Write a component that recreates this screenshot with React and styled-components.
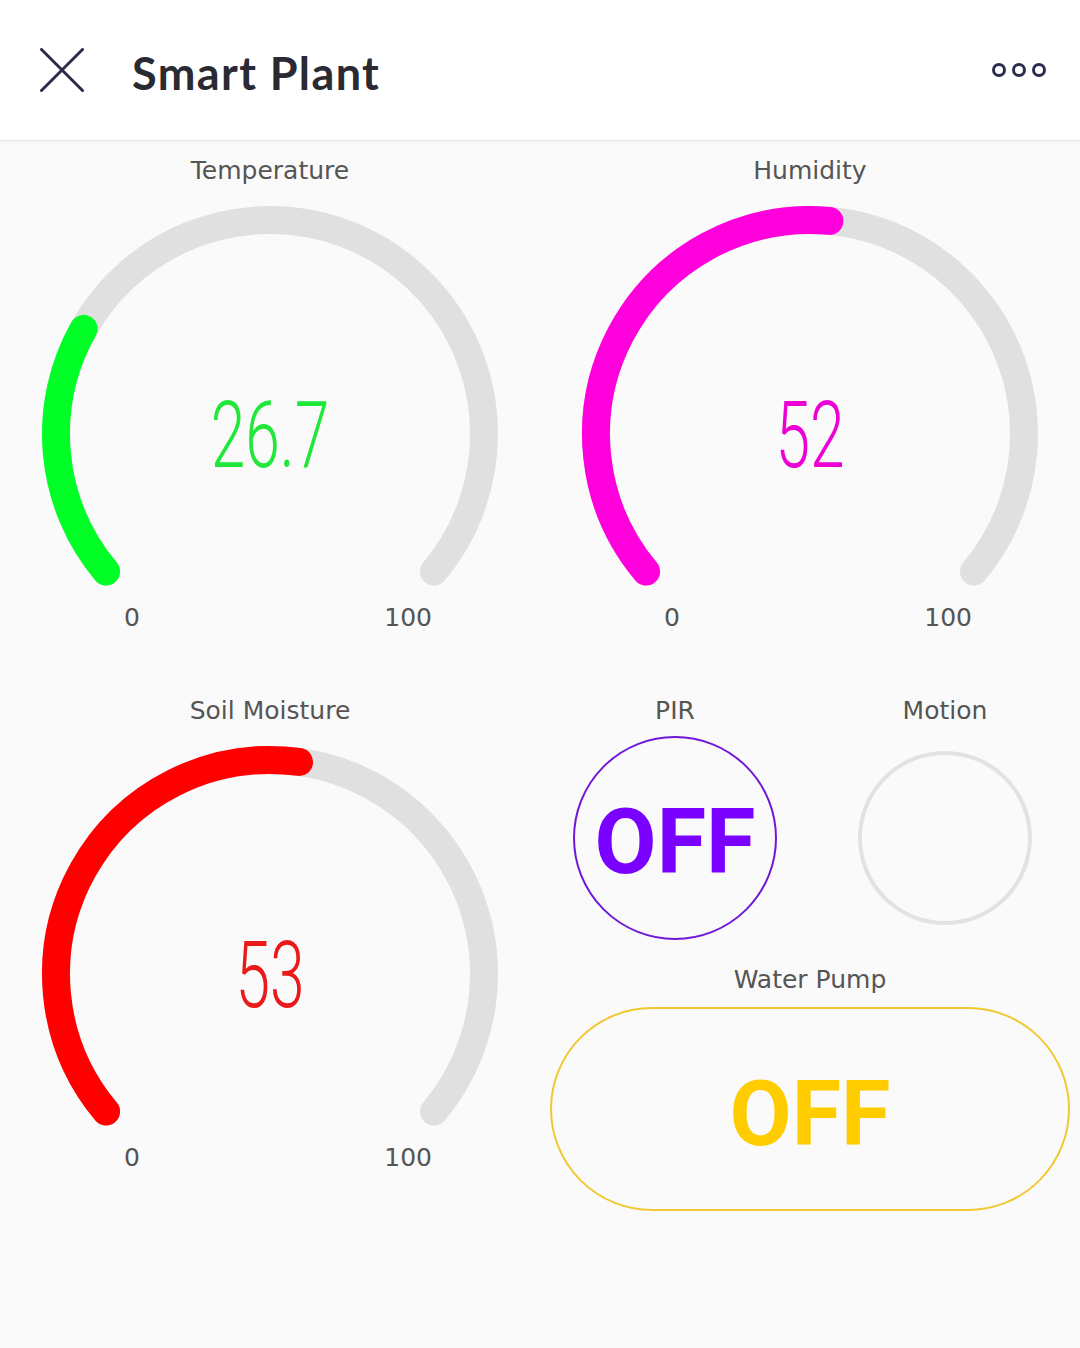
import React from 'react';
import styled, { createGlobalStyle } from 'styled-components';

const GlobalStyle = createGlobalStyle`
    html, body {
        margin: 0;
        padding: 0;
        background: #fafafa;
    }
    body {
        font-family: "Lato", "Liberation Sans", sans-serif;
    }
`

const CX = 270;
const CY = 248;
const R = 214;
const SPAN = 260;
const START = 220;

function point(deg) {
    const rad = (deg * Math.PI) / 180;
    return [CX + R * Math.cos(rad), CY - R * Math.sin(rad)];
}

function arcPath(fraction) {
    const sweep = SPAN * fraction;
    const [x1, y1] = point(START);
    const [x2, y2] = point(START - sweep);
    const large = sweep > 180 ? 1 : 0;
    return `M ${x1.toFixed(2)} ${y1.toFixed(2)} A ${R} ${R} 0 ${large} 1 ${x2.toFixed(2)} ${y2.toFixed(2)}`;
}

const Gauge = ({ label, value, display, color, textColor }) => (
    <Widget>
        <Label>{label}</Label>
        <GaugeBox>
            <svg width="540" height="420" viewBox="0 0 540 420">
                <path d={arcPath(1)} fill="none" stroke="#e0e0e0" strokeWidth="28" strokeLinecap="round" />
                <path d={arcPath(value / 100)} fill="none" stroke={color} strokeWidth="28" strokeLinecap="round" />
            </svg>
            <Value color={textColor}>{display}</Value>
        </GaugeBox>
        <ScaleRow>
            <Label as="span">0</Label>
            <Label as="span">100</Label>
        </ScaleRow>
    </Widget>
)

const App = () => (
    <Page>
        <GlobalStyle />
        <Header>
            <HeaderLeft>
                <svg width="44" height="44" viewBox="0 0 44 44">
                    <path d="M1.5 1.5 L42.5 42.5 M42.5 1.5 L1.5 42.5" stroke="#2b2d4a" strokeWidth="3" strokeLinecap="round" />
                </svg>
                <Title>Smart Plant</Title>
            </HeaderLeft>
            <svg width="54" height="18" viewBox="0 0 54 18">
                <circle cx="7" cy="9" r="5.5" fill="none" stroke="#2b2d4f" strokeWidth="3" />
                <circle cx="27" cy="9" r="5.5" fill="none" stroke="#2b2d4f" strokeWidth="3" />
                <circle cx="47" cy="9" r="5.5" fill="none" stroke="#2b2d4f" strokeWidth="3" />
            </svg>
        </Header>
        <Grid>
            <Gauge label="Temperature" value={26.7} display="26.7" color="#00ff26" textColor="#20e83a" />
            <Gauge label="Humidity" value={52} display="52" color="#ff00dc" textColor="#ec00d4" />
            <Gauge label="Soil Moisture" value={53} display="53" color="#ff0000" textColor="#ea1a1a" />
            <Widget>
                <SensorRow>
                    <SensorCol>
                        <Label>PIR</Label>
                        <CircleArea>
                            <RoundButton>OFF</RoundButton>
                        </CircleArea>
                    </SensorCol>
                    <SensorCol>
                        <Label>Motion</Label>
                        <CircleArea>
                            <Led />
                        </CircleArea>
                    </SensorCol>
                </SensorRow>
                <Label style={{ marginTop: 25 }}>Water Pump</Label>
                <PillButton>OFF</PillButton>
            </Widget>
        </Grid>
    </Page>
)

export default App;

//Styled Components
const Page = styled.div`
    width: 1080px;
    min-height: 1348px;
    background: #fafafa;
`

const Header = styled.header`
    height: 141px;
    background: #fff;
    border-bottom: 1px solid #e6e6e6;
    box-shadow: 0 1px 3px rgba(0, 0, 0, 0.05);
    display: flex;
    align-items: center;
    justify-content: space-between;
    padding: 0 34px 0 40px;
    box-sizing: border-box;
`

const HeaderLeft = styled.div`
    display: flex;
    align-items: center;
    gap: 48px;
`

const Title = styled.h1`
    margin: 0 0 -6px;
    font-family: "Lato", "Open Sans", sans-serif;
    font-weight: 700;
    font-size: 45px;
    color: #2a2a33;
    letter-spacing: 1.4px;
`

const Grid = styled.div`
    display: grid;
    grid-template-columns: 540px 540px;
    grid-auto-rows: 540px;
`

const Widget = styled.div`
    display: flex;
    flex-direction: column;
    align-items: center;
    padding-top: 15px;
`

const Label = styled.div`
    font-family: "Comic Sans MS", "DejaVu Sans", sans-serif;
    font-size: 25px;
    line-height: 30px;
    height: 30px;
    color: #555;
`

const GaugeBox = styled.div`
    position: relative;
    width: 540px;
    height: 420px;

    svg {
        display: block;
    }
`

const Value = styled.div`
    position: absolute;
    left: 0;
    right: 0;
    top: ${CY - 53}px;
    text-align: center;
    font-family: "Roboto", sans-serif;
    font-weight: 300;
    font-size: 93px;
    line-height: 110px;
    color: ${props => props.color};
    transform: scaleX(0.67);
`

const ScaleRow = styled.div`
    width: 540px;
    display: flex;
    justify-content: space-between;
    padding: 0 108px 0 124px;
    box-sizing: border-box;
    margin-top: -3px;
`

const SensorRow = styled.div`
    display: grid;
    grid-template-columns: 270px 270px;
`

const SensorCol = styled.div`
    display: flex;
    flex-direction: column;
    align-items: center;
`

const CircleArea = styled.div`
    margin-top: 10px;
    height: 204px;
    display: flex;
    align-items: center;
    justify-content: center;
`

const RoundButton = styled.div`
    width: 204px;
    height: 204px;
    border-radius: 50%;
    border: 2px solid #7018d8;
    box-sizing: border-box;
    display: flex;
    align-items: center;
    justify-content: center;
    padding-top: 8px;
    font-family: "Roboto", sans-serif;
    font-weight: 700;
    font-size: 90px;
    color: #7a00ff;
`

const Led = styled.div`
    width: 174px;
    height: 174px;
    border-radius: 50%;
    border: 4px solid #e2e2e2;
    box-sizing: border-box;
`

const PillButton = styled.div`
    margin-top: 12px;
    width: 520px;
    height: 204px;
    border-radius: 102px;
    border: 2px solid #f2c832;
    box-sizing: border-box;
    display: flex;
    align-items: center;
    justify-content: center;
    padding-top: 10px;
    font-family: "Roboto", sans-serif;
    font-weight: 700;
    font-size: 90px;
    color: #ffcc00;
`
